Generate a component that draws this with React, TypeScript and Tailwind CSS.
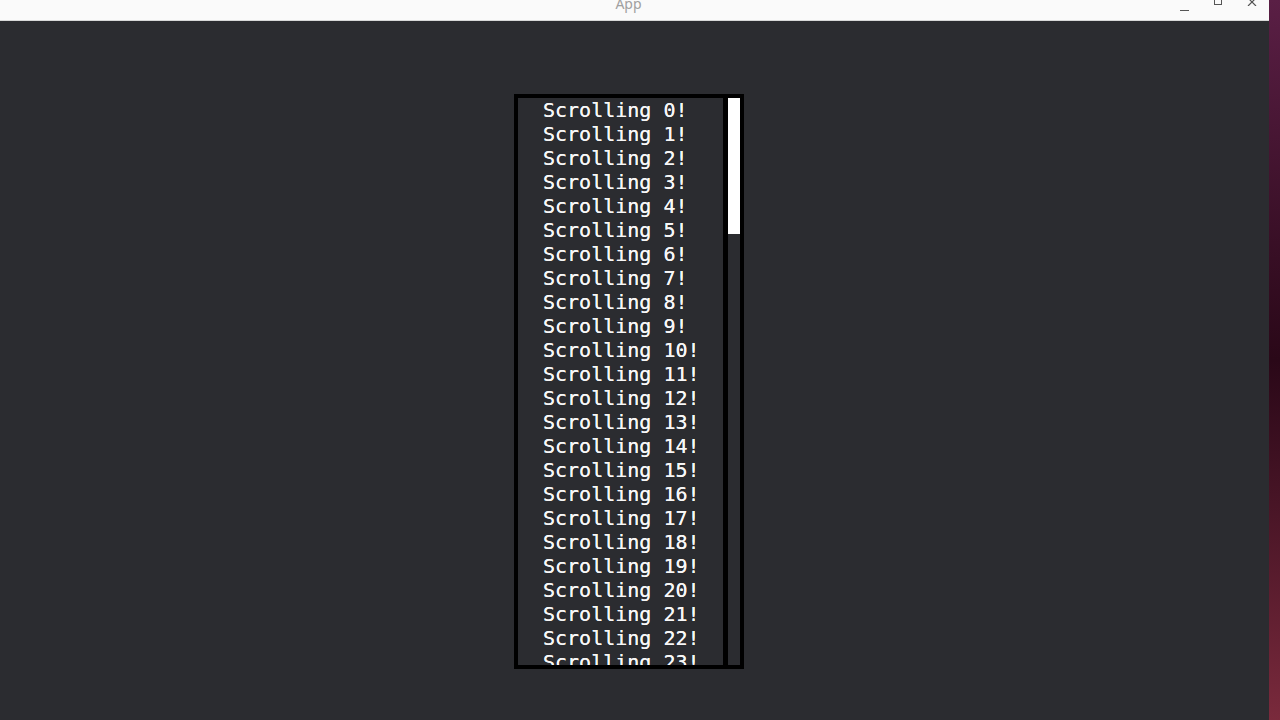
import React from "react";

export default function App() {
  const lines = Array.from({ length: 100 }, (_, i) => `Scrolling ${i}!`);
  return (
    <div className="flex w-[1280px] h-[720px] overflow-hidden">
      <div className="flex flex-col w-[1269px] h-full bg-[#2b2c30]">
        <div className="relative h-[20px] bg-[#fafafa] flex items-center justify-center">
          <span
            className="text-[14px] leading-none text-[#a0a0a0] -mt-[12px] ml-[-12px]"
            style={{ fontFamily: '"Noto Sans", sans-serif' }}
          >
            App
          </span>
          <div className="absolute right-0 top-0 h-full flex items-start">
            <div className="w-[34px] h-[11px] flex items-end justify-center">
              <div className="w-[9px] h-[1px] bg-[#555]" />
            </div>
            <div className="w-[34px] h-[12px] flex items-start justify-center">
              <div className="w-[8px] h-[7px] border border-[#555] mt-[-2px]" />
            </div>
            <div className="w-[34px] h-[12px] flex items-start justify-center">
              <svg width="10" height="8" viewBox="0 0 10 8" className="mt-[-2px]">
                <path d="M1 0 L9 8 M9 0 L1 8" stroke="#555" strokeWidth="1.2" />
              </svg>
            </div>
          </div>
        </div>
        <div className="h-[1px] bg-[#d8d8d8]" />
        <div className="flex-1 pt-[73px] pl-[514px]">
          <div className="w-[230px] h-[575px] border-4 border-black flex bg-[#2b2c30]">
            <div
              className="w-[205px] h-full overflow-hidden pl-[25px] text-[20px] leading-[24px] text-[#f7f7f7] whitespace-pre [text-shadow:0_0_0.4px_#f7f7f7]"
              style={{ fontFamily: '"DejaVu Sans Mono", monospace' }}
            >
              {lines.map((l) => (
                <div key={l}>{l}</div>
              ))}
            </div>
            <div className="w-[5px] h-full bg-black" />
            <div className="flex-1 h-full bg-[#2b2c30]">
              <div className="w-full h-[136px] bg-white" />
            </div>
          </div>
        </div>
      </div>
      <div className="flex-1 h-full bg-gradient-to-b from-[#5a1f45] via-[#2a0818] to-[#7a2a3c]" />
    </div>
  );
}
